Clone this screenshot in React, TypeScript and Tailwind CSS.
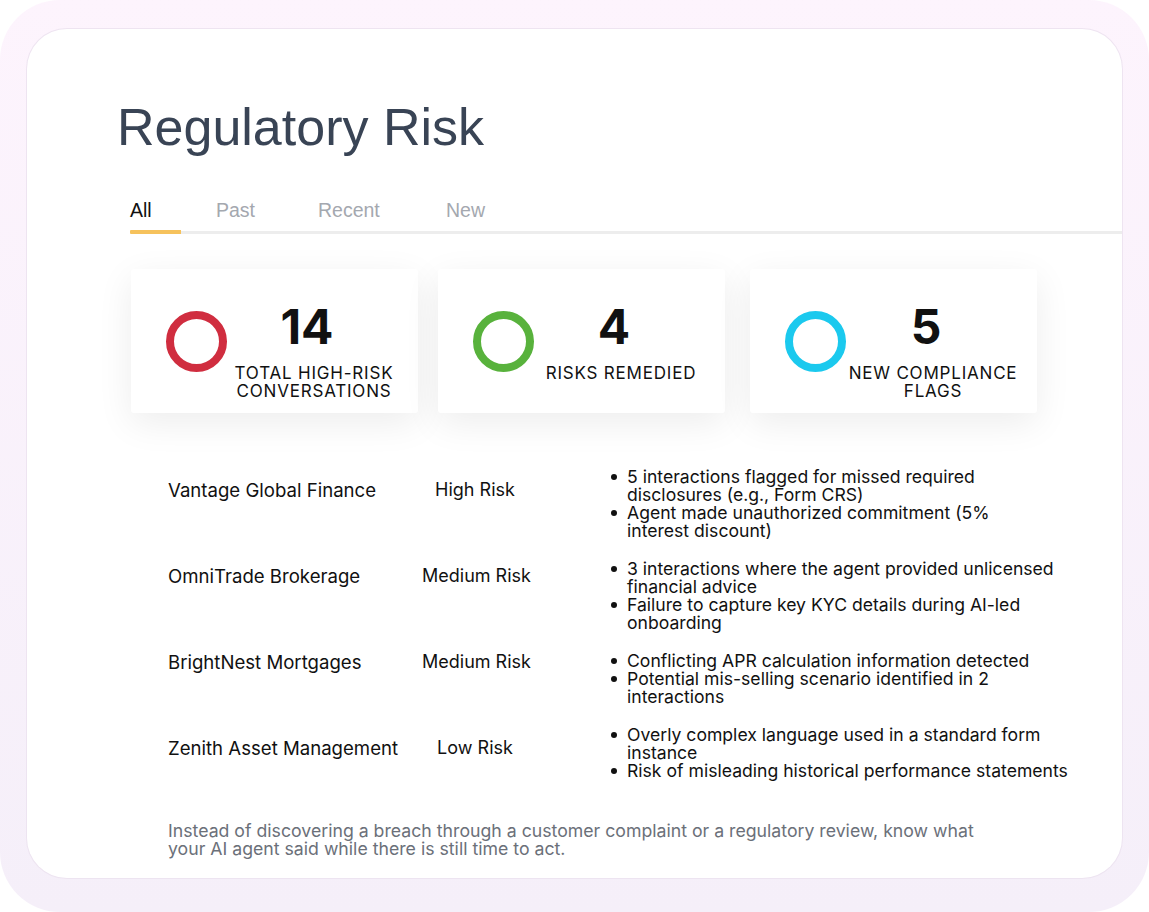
import React from "react";

const stats = [
  { n: "14", lines: ["TOTAL HIGH-RISK", "CONVERSATIONS"], ring: "border-[#d02d3f]", ml: "ml-px" },
  { n: "4", lines: ["RISKS REMEDIED"], ring: "border-[#58b23c]", ml: "ml-[20px]" },
  { n: "5", lines: ["NEW COMPLIANCE", "FLAGS"], ring: "border-[#1bc9ee]", ml: "ml-[25px]" },
];

const rows = [
  {
    name: "Vantage Global Finance",
    risk: "High Risk",
    items: [
      ["5 interactions flagged for missed required", "disclosures (e.g., Form CRS)"],
      ["Agent made unauthorized commitment (5%", "interest discount)"],
    ],
  },
  {
    name: "OmniTrade Brokerage",
    risk: "Medium Risk",
    items: [
      ["3 interactions where the agent provided unlicensed", "financial advice"],
      ["Failure to capture key KYC details during AI-led", "onboarding"],
    ],
  },
  {
    name: "BrightNest Mortgages",
    risk: "Medium Risk",
    items: [
      ["Conflicting APR calculation information detected"],
      ["Potential mis-selling scenario identified in 2", "interactions"],
    ],
  },
  {
    name: "Zenith Asset Management",
    risk: "Low Risk",
    items: [
      ["Overly complex language used in a standard form", "instance"],
      ["Risk of misleading historical performance statements"],
    ],
  },
];

const tabs = [
  { label: "All", w: "w-[86px]", active: true },
  { label: "Past", w: "w-[102px]", active: false },
  { label: "Recent", w: "w-[128px]", active: false },
  { label: "New", w: "w-[80px]", active: false },
];

export default function App() {
  return (
    <div className="w-[1149px] h-[912px] bg-white">
      <div className="w-full h-full rounded-[60px] bg-gradient-to-b from-[#fdf4fd] to-[#f5eff9] pt-[29px] pl-[27px] pr-[27px] pb-[34px]">
        <div className="h-full rounded-[40px] bg-white shadow-[0_0_0_1px_rgba(236,226,240,0.9)] pl-[90px] pt-[68px]">
          <h1
            className="text-[52px] leading-[60px] text-[#394455]"
            style={{ fontFamily: '"Liberation Sans", Arial, sans-serif' }}
          >
            Regulatory Risk
          </h1>

          <div className="ml-[13px] mt-[42px]">
            <div
              className="flex pb-[9px] text-[19.5px] leading-[22px]"
              style={{ fontFamily: '"Liberation Sans", Arial, sans-serif' }}
            >
              {tabs.map((t) => (
                <div key={t.label} className={`${t.w} ${t.active ? "text-[#111111]" : "text-[#a4a8af]"}`}>
                  {t.label}
                </div>
              ))}
            </div>
            <div className="flex h-[4px] items-end">
              <div className="w-[51px] h-[4px] bg-[#f6c25c] rounded-l-[1px]" />
              <div className="flex-1 h-[3px] bg-[#ededed]" />
            </div>

            <div
              className="flex mt-[35px]"
              style={{ fontFamily: "Inter, 'Noto Sans', sans-serif" }}
            >
              {stats.map((s) => (
                <div
                  key={s.n}
                  className={`${s.ml} w-[287px] h-[144px] bg-white rounded-[3px] shadow-[0_10px_36px_rgba(0,0,0,0.075)] flex pl-[35px] pr-[17px]`}
                >
                  <div className={`self-center w-[61px] h-[61px] shrink-0 rounded-full border-[8px] ${s.ring}`} />
                  <div className="flex-1 pt-[34px] text-center whitespace-nowrap text-[#111111]">
                    <div className="text-[48px] leading-[48px] font-bold pr-[14px]">{s.n}</div>
                    <div className="mt-[13px] text-[17px] leading-[18px] tracking-[0.8px]">
                      {s.lines.map((l) => (
                        <div key={l}>{l}</div>
                      ))}
                    </div>
                  </div>
                </div>
              ))}
            </div>
          </div>

          <div
            className="ml-[51px] mt-[55px] text-[#111111]"
            style={{ fontFamily: "Inter, 'Noto Sans', sans-serif" }}
          >
            <div className="flex items-start">
              <div className="w-[440px] pt-[13px] flex flex-col gap-[68px] text-[18.6px] leading-[18px]">
                {rows.map((r) => (
                  <div key={r.name} className="flex">
                    <div className="w-[254px] whitespace-nowrap">{r.name}</div>
                    <div className="w-[106px] text-center whitespace-nowrap text-[18px]">{r.risk}</div>
                  </div>
                ))}
              </div>
              <div className="flex flex-col gap-[20px] text-[17.6px] leading-[18px]">
                {rows.map((r) => (
                  <ul key={r.name} className="flex flex-col">
                    {r.items.map((it) => (
                      <li key={it[0]} className="flex">
                        <div className="w-[19px] h-[18px] shrink-0 flex items-center">
                          <div className="ml-[3px] w-[6px] h-[6px] rounded-full bg-[#111111]" />
                        </div>
                        <div className="whitespace-nowrap">
                          {it.map((line) => (
                            <div key={line}>{line}</div>
                          ))}
                        </div>
                      </li>
                    ))}
                  </ul>
                ))}
              </div>
            </div>

            <p className="mt-[42px] text-[17.7px] leading-[18px] text-[#6b7079] whitespace-nowrap">
              Instead of discovering a breach through a customer complaint or a regulatory review, know what
              <br />
              your AI agent said while there is still time to act.
            </p>
          </div>
        </div>
      </div>
    </div>
  );
}
